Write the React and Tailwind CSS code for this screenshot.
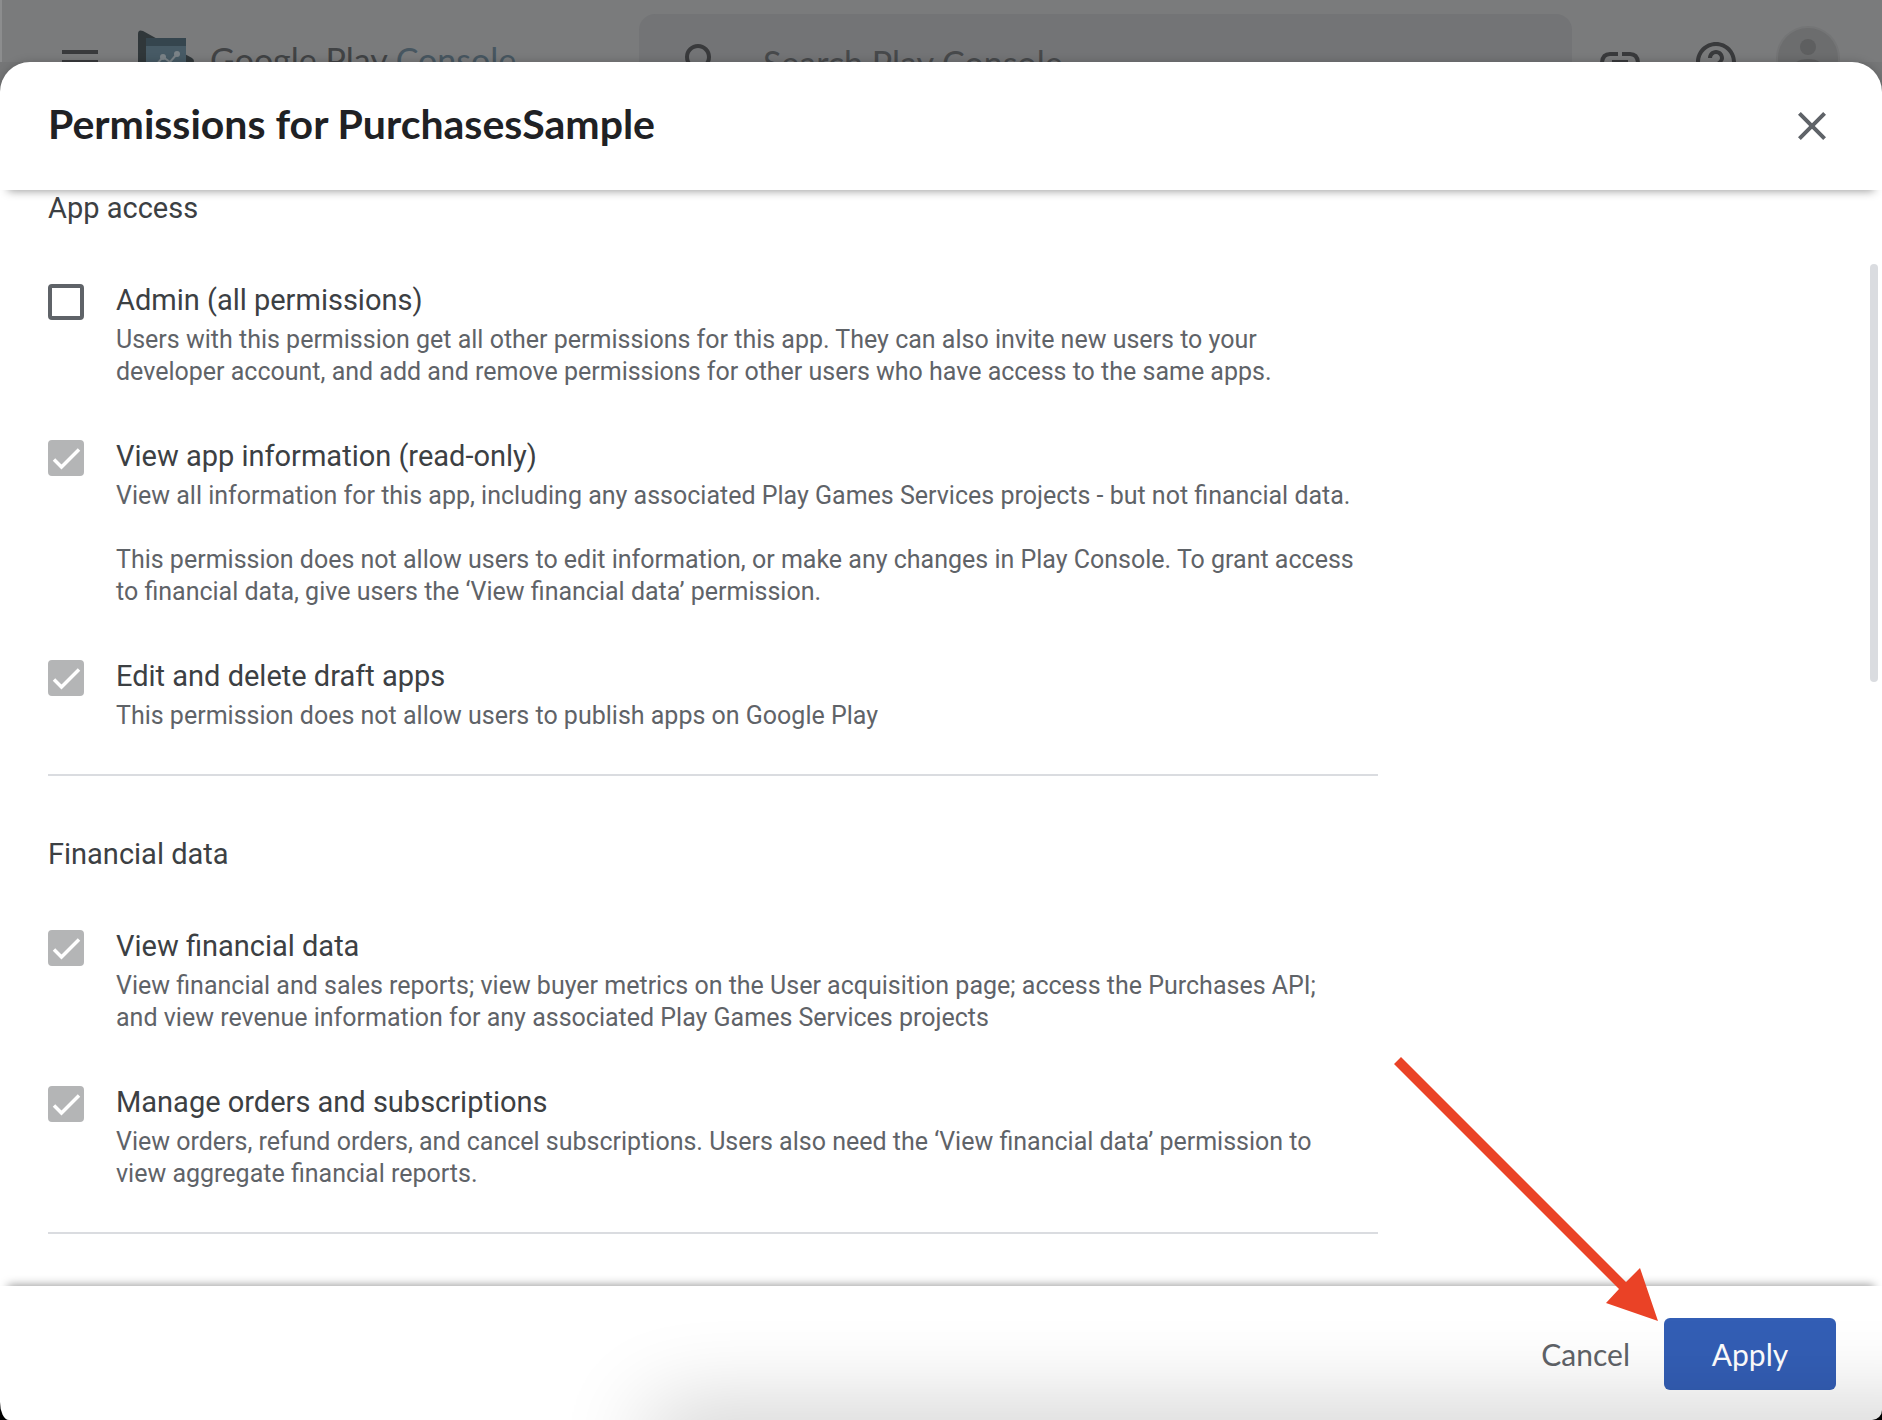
import React from "react";

const sections = [
  {
    title: "App access",
    items: [
      {
        id: "admin",
        title: "Admin (all permissions)",
        text: [
          "Users with this permission get all other permissions for this app. They can also invite new users to your",
          "developer account, and add and remove permissions for other users who have access to the same apps.",
        ],
      },
      {
        id: "view-app",
        title: "View app information (read-only)",
        granted: true,
        text: [
          "View all information for this app, including any associated Play Games Services projects - but not financial data.",
          "",
          "This permission does not allow users to edit information, or make any changes in Play Console. To grant access",
          "to financial data, give users the ‘View financial data’ permission.",
        ],
      },
      {
        id: "drafts",
        title: "Edit and delete draft apps",
        granted: true,
        text: ["This permission does not allow users to publish apps on Google Play"],
      },
    ],
  },
  {
    title: "Financial data",
    items: [
      {
        id: "view-financial",
        title: "View financial data",
        granted: true,
        text: [
          "View financial and sales reports; view buyer metrics on the User acquisition page; access the Purchases API;",
          "and view revenue information for any associated Play Games Services projects",
        ],
      },
      {
        id: "orders",
        title: "Manage orders and subscriptions",
        granted: true,
        text: [
          "View orders, refund orders, and cancel subscriptions. Users also need the ‘View financial data’ permission to",
          "view aggregate financial reports.",
        ],
      },
    ],
  },
];

function Logo() {
  return (
    <svg className="h-16 w-[60px] shrink-0" viewBox="0 0 60 64" aria-hidden="true">
      <path d="M2 4Q2 -1 7 1L56 28Q60 31 56 34L7 63Q2 65 2 60Z" fill="#30373a" />
      <rect x="10" y="8" width="40" height="48" fill="#475a65" />
      <rect x="10" y="8" width="40" height="8" fill="#35454e" />
      <path d="M20 35L27 27L34 32L41 24" fill="none" stroke="#7b8388" strokeWidth="2" />
      <circle cx="27" cy="27" r="3" fill="#7b8388" />
      <circle cx="41" cy="24" r="3" fill="#7b8388" />
    </svg>
  );
}

function TopBar() {
  return (
    <header className="flex h-[62px] items-start overflow-hidden border-l-2 border-[#8c8d8e] bg-[#7a7b7c] pr-[42px] text-[#393a3c]">
      <button type="button" aria-label="Menu" className="mt-[50px] ml-[60px] flex w-9 flex-col gap-1.5">
        <span className="h-1 w-full bg-[#393a3c]" />
        <span className="h-1 w-full bg-[#393a3c]" />
        <span className="h-1 w-full bg-[#393a3c]" />
      </button>
      <a href="#home" aria-label="Google Play Console" className="mt-[30px] ml-[38px] flex w-[503px] gap-3.5 whitespace-nowrap">
        <Logo />
        <span className="pt-2.5 font-['Lato'] text-[34px] leading-[40px] text-[#414345]">
          Google Play <span className="text-[#475660]">Console</span>
        </span>
      </a>
      <label className="mt-3.5 flex h-24 min-w-0 flex-1 items-start rounded-[16px] bg-[#737476]">
        <svg className="mt-6 ml-10 size-12 shrink-0" viewBox="0 0 24 24" fill="#393a3c" aria-hidden="true">
          <path d="M15.5 14h-.79l-.28-.27A6.47 6.47 0 0 0 16 9.5 6.5 6.5 0 1 0 9.5 16c1.61 0 3.09-.59 4.23-1.57l.27.28v.79l5 4.99L20.49 19l-4.99-5zm-6 0C7.01 14 5 11.99 5 9.5S7.01 5 9.5 5 14 7.01 14 9.5 11.99 14 9.5 14z" />
        </svg>
        <input
          type="text"
          aria-label="Search Play Console"
          placeholder="Search Play Console"
          className="mt-6 ml-9 h-12 min-w-0 flex-1 bg-transparent font-['Lato'] text-[34px] outline-none placeholder:text-[#47494b]"
        />
      </label>
      <button type="button" aria-label="Copy link" className="mt-10 ml-6">
        <svg className="size-12" viewBox="0 0 48 48" fill="none" stroke="currentColor" strokeWidth="4" aria-hidden="true">
          <path d="M22 14H14Q6 14 6 24Q6 34 14 34H22M26 14H34Q42 14 42 24Q42 34 34 34H26M16 22H32" />
        </svg>
      </button>
      <button type="button" aria-label="Help" className="mt-[38px] ml-12">
        <svg className="size-12" viewBox="0 0 24 24" fill="currentColor" aria-hidden="true">
          <path d="M11 18h2v-2h-2v2zm1-16C6.480 2 2 6.480 2 12s4.480 10 10 10 10-4.480 10-10S17.520 2 12 2zm0 18c-4.410 0-8-3.590-8-8s3.590-8 8-8 8 3.590 8 8-3.590 8-8 8zm0-14c-2.210 0-4 1.790-4 4h2c0-1.100.9-2 2-2s2 .9 2 2c0 2-3 1.750-3 5h2c0-2.250 3-2.500 3-5 0-2.210-1.790-4-4-4z" />
        </svg>
      </button>
      <button type="button" aria-label="Account" className="mt-[26px] ml-[36px]">
        <svg className="size-16" viewBox="0 0 64 64" aria-hidden="true">
          <circle cx="32" cy="32" r="32" fill="#747576" />
          <circle cx="32" cy="32" r="30" fill="#6c6d6e" />
          <circle cx="32" cy="21" r="8" fill="#5e5f60" />
          <path d="M16 46Q16 33 32 33Q48 33 48 46Z" fill="#5e5f60" />
        </svg>
      </button>
    </header>
  );
}

function Permission({ item }) {
  return (
    <div className="flex gap-8">
      <span className="relative mt-1 size-9 shrink-0">
        <input
          id={item.id}
          type="checkbox"
          defaultChecked={item.granted}
          disabled={item.granted}
          className="block size-9 appearance-none rounded-[4px] border-4 border-[#5f6368] disabled:border-[#b4b5b6] disabled:bg-[#b4b5b6]"
        />
        {item.granted && (
          <svg className="pointer-events-none absolute inset-0 size-9" viewBox="0 0 36 36" aria-hidden="true">
            <path d="M6 19.500L13.500 27L31 9.500" fill="none" stroke="#fff" strokeWidth="3.500" />
          </svg>
        )}
      </span>
      <div className="min-w-0">
        <label htmlFor={item.id} className="block text-[29px] leading-[40px] text-[#3c4043]">
          {item.title}
        </label>
        <p className="mt-1 text-[25px] leading-[32px] text-[#5f6368]">
          {item.text.map((line, i) => (
            <span key={i} className="block min-h-8">
              {line}
            </span>
          ))}
        </p>
      </div>
    </div>
  );
}

export default function App() {
  return (
    <div className="relative flex min-h-screen flex-col bg-black font-['Roboto',sans-serif]">
      <TopBar />
      <div className="flex flex-1 flex-col bg-linear-to-b from-[#757677] from-0% via-[#757677] via-50% to-black to-50%">
        <main className="relative flex flex-1 flex-col overflow-hidden rounded-t-[30px] bg-white shadow-[0_0_10px_rgba(0,0,0,0.2)] [border-bottom-left-radius:9px_18px] [border-bottom-right-radius:10px_10px]">
          <div className="flex h-32 items-center justify-between pr-[46px] pb-1 pl-12">
            <h1 className="font-['Lato'] text-[41px] leading-[48px] font-bold text-[#202124]">
              Permissions for PurchasesSample
            </h1>
            <button type="button" aria-label="Close" className="mt-1">
              <svg className="size-12" viewBox="0 0 24 24" fill="#5f6368" aria-hidden="true">
                <path d="M19 6.410L17.590 5 12 10.590 6.410 5 5 6.410 10.590 12 5 17.590 6.410 19 12 13.410 17.590 19 19 17.590 13.410 12z" />
              </svg>
            </button>
          </div>
          <div className="relative flex-1 overflow-hidden">
            <div className="pointer-events-none absolute inset-x-2 -top-4 h-4 shadow-[0_1px_10px_rgba(0,0,0,0.4)]" />
            <div className="pointer-events-none absolute inset-x-2 -bottom-4 h-4 shadow-[0_-1px_10px_rgba(0,0,0,0.4)]" />
            <div className="absolute top-[74px] right-1 h-[418px] w-2 rounded-full bg-[#dadce0]" />
            <div className="mr-14 ml-12 flex max-w-[1330px] flex-col gap-[60px] pb-[52px]">
              {sections.map((s) => (
                <section key={s.title} className="border-b-2 border-[#dadce0] pb-[42px]">
                  <h2 className="text-[29px] leading-[36px] text-[#3c4043]">{s.title}</h2>
                  <div className="mt-[54px] flex flex-col gap-12">
                    {s.items.map((item) => (
                      <Permission key={item.id} item={item} />
                    ))}
                  </div>
                </section>
              ))}
            </div>
          </div>
          <footer className="flex items-center justify-end gap-[34px] pt-8 pr-[46px] pb-[30px] font-['Lato'] text-[30px]">
            <button type="button" className="text-[#5f6368]">Cancel</button>
            <button type="button" className="h-[72px] w-[172px] rounded-[6px] bg-[#335eb5] text-white">Apply</button>
          </footer>
          <div className="pointer-events-none absolute -right-20 -bottom-12 left-[670px] h-10 shadow-[0_0_90px_20px_rgba(0,0,0,0.2)]" />
        </main>
      </div>
      <svg className="pointer-events-none absolute right-[224px] bottom-[99px] h-[265px] w-[265px]" viewBox="0 0 265 265" aria-hidden="true">
        <path d="M1 8L8 1L233 226L247 212L265 265L213 247L226 233Z" fill="#ea4226" />
      </svg>
    </div>
  );
}
